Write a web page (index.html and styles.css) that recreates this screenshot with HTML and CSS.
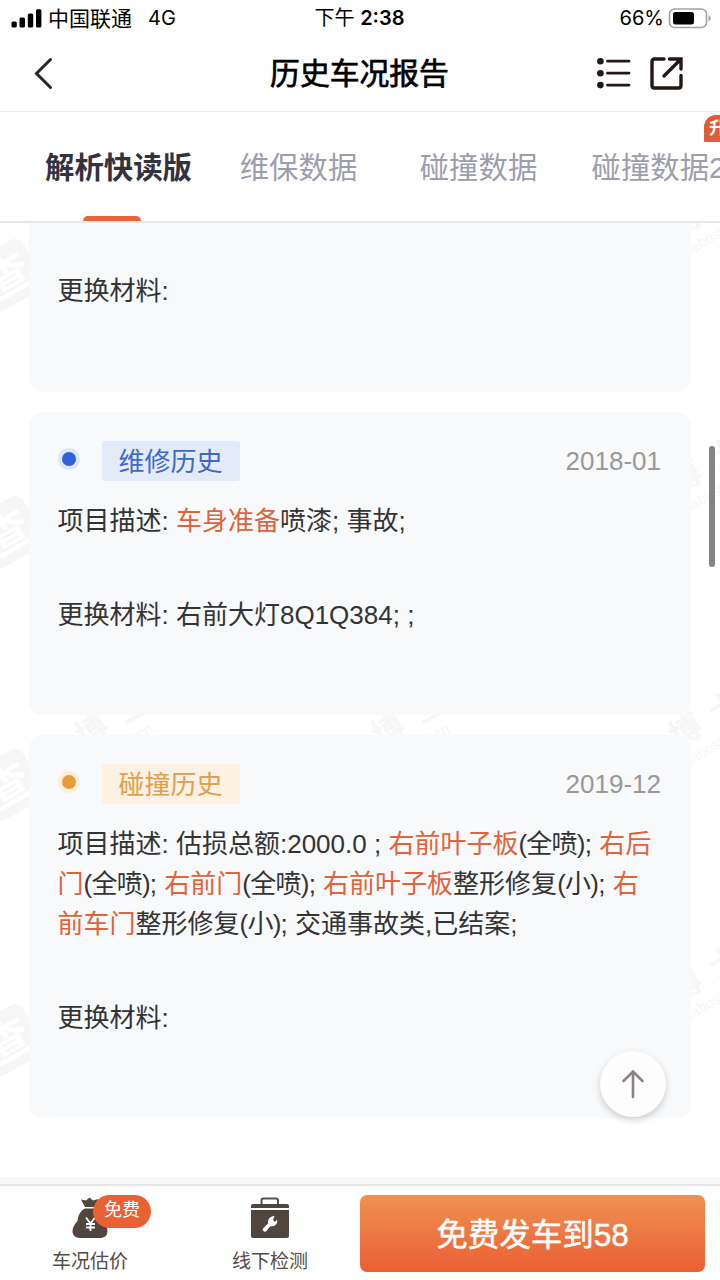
FILE: index.html
```html
<!doctype html>
<html lang="zh-CN">
<head>
<meta charset="utf-8">
<meta name="viewport" content="width=device-width, initial-scale=1.0">
<link rel="stylesheet" href="styles.css">
<title>历史车况报告</title>
</head>
<body>
<div class="status">
	<div class="status-left">
		<svg class="signal" width="31" height="19" viewBox="0 0 31 19">
			<rect x="0.5" y="12.5" width="5.3" height="6" rx="1.5"/>
			<rect x="8.5" y="8.5" width="5.5" height="10" rx="1.5"/>
			<rect x="16.8" y="4.5" width="5.4" height="14" rx="1.5"/>
			<rect x="25" y="0.3" width="5.4" height="18.2" rx="1.5"/>
		</svg>
		<span class="carrier">中国联通</span>
		<span class="network">4G</span>
	</div>
	<div class="clock">下午 <b>2:38</b></div>
	<div class="status-right">
		<span>66%</span>
		<svg width="43" height="21" viewBox="0 0 43 21">
			<rect x="1.5" y="1" width="37" height="18.5" rx="5" fill="none" stroke="#a3a3a3" stroke-width="1.6"/>
			<rect x="5" y="4" width="21" height="12.5" rx="2.5"/>
			<path d="M40.5 7.2c1.6.6 2.2 1.7 2.2 3s-.6 2.4-2.2 3z" fill="#a3a3a3"/>
		</svg>
	</div>
</div>

<header class="nav">
	<svg class="back" width="20" height="34" viewBox="0 0 20 34"><path d="M17.5 3.5 3.5 17.5 17.5 31.5"/></svg>
	<h1>历史车况报告</h1>
	<div class="nav-actions">
		<svg width="34" height="34" viewBox="0 0 34 34">
			<g fill="#231815"><circle cx="3.4" cy="5.2" r="3.3"/><circle cx="3.4" cy="17.2" r="3.3"/><circle cx="3.4" cy="29.1" r="3.3"/></g>
			<path d="M10.5 5.2H32M10.5 17.2H32M10.5 29.1H32"/>
		</svg>
		<svg width="34" height="34" viewBox="0 0 34 34">
			<path class="thick" d="M14 3H4.500Q2 3 2 5.500V29.500Q2 32 4.500 32H28.500Q31 32 31 29.500V19.500M19.500 3H31V13M31 3 14 20"/>
		</svg>
	</div>
</header>

<nav class="tabs">
	<a class="tab active">解析快读版</a>
	<a class="tab">维保数据</a>
	<a class="tab">碰撞数据</a>
	<a class="tab">碰撞数据2<span class="badge">升级</span></a>
</nav>

<main class="content">
	<svg class="watermark" width="720" height="955" viewBox="0 223 720 955">
		<defs>
			<g id="mark">
				<g transform="translate(8 275) rotate(-30)">
					<rect x="-29" y="-29" width="58" height="58" rx="10"/>
					<text class="mark-logo" x="-22" y="17">查</text>
				</g>
				<g transform="translate(90 218) rotate(-30)">
					<text class="mark-name" x="-16" y="14">博</text>
					<text class="mark-name" x="30" y="14">士</text>
					<text class="mark-url" x="-24" y="35">chaboshi.cn</text>
				</g>
			</g>
		</defs>
		<use href="#mark"/><use href="#mark" x="297"/><use href="#mark" x="594"/>
		<use href="#mark" y="257"/><use href="#mark" x="297" y="257"/><use href="#mark" x="594" y="257"/>
		<use href="#mark" y="510"/><use href="#mark" x="297" y="510"/><use href="#mark" x="594" y="510"/>
		<use href="#mark" y="765"/><use href="#mark" x="297" y="765"/><use href="#mark" x="594" y="765"/>
	</svg>

	<section class="card first">
		<p>更换材料:</p>
	</section>

	<section class="card repair">
		<div class="card-head">
			<i class="dot"></i><span class="tag">维修历史</span><time>2018-01</time>
		</div>
		<p>项目描述: <em>车身准备</em>喷漆; 事故;</p>
		<p>更换材料: 右前大灯8Q1Q384; ;</p>
	</section>

	<section class="card crash">
		<div class="card-head">
			<i class="dot"></i><span class="tag">碰撞历史</span><time>2019-12</time>
		</div>
		<p>项目描述: 估损总额:2000.0 ; <em>右前叶子板</em><span class="note">(全喷)</span>; <em>右后门</em><span class="note">(全喷)</span>; <em>右前门</em><span class="note">(全喷)</span>; <em>右前叶子板</em>整形修复<span class="note">(小)</span>; <em>右前车门</em>整形修复<span class="note">(小)</span>; 交通事故类,已结案;</p>
		<p>更换材料:</p>
	</section>

	<div class="scrollbar"></div>
	<a class="to-top">
		<svg width="24" height="30" viewBox="0 0 24 30"><path d="M12 28V2.500M2.500 12 12 2.500 21.500 12"/></svg>
	</a>
</main>

<footer class="bottom">
	<a class="action">
		<span class="icon">
			<svg width="36" height="42" viewBox="0 0 36 42">
				<path d="M9 2.500 14 3.500 17.500.500 21 3.500 26 2 24 10H13z"/>
				<path d="M13 11.500H24C29 15 30 19 30.500 24 33 27 35.500 30 35.500 34 35.500 39 32 41 28 41H8C3 41 .500 38 .500 34 .500 30 3 27 5.500 24 6 19 8 14 13 11.500z"/>
				<path class="yen" d="M14 20.500 18.500 26.500 23 20.500M14 27H23M14 30.500H23M18.500 26.500V34"/>
			</svg>
			<span class="free">免费</span>
		</span>
		<span>车况估价</span>
	</a>
	<a class="action">
		<span class="icon">
			<svg width="40" height="42" viewBox="0 0 40 42">
				<path d="M11.500 8V3.500Q11.500 1.500 13.500 1.500H26Q28 1.500 28 3.500V8" fill="none" stroke="#5a504b" stroke-width="2"/>
				<path d="M1 9Q1 7 3 7H37Q39 7 39 9V11H1zM1 13H39V39Q39 41 37 41H3Q1 41 1 39z"/>
				<path d="M22 19.500Q24 18.500 24.500 19L23 23 25 25 27 22.500Q28 27 24 29 21.500 29 20 29.500L16 34.500Q13 35.500 12.500 32L18 26.500Q17.500 21 22 19.500z" fill="#fff"/>
			</svg>
		</span>
		<span>线下检测</span>
	</a>
	<a class="send">免费发车到58</a>
</footer>
</body>
</html>
```
FILE: styles.css
```css
* {
	box-sizing: border-box;
}
body {
	display: flex;
	flex-direction: column;
	width: 720px;
	height: 1280px;
	margin: 0;
	overflow: hidden;
	background: #fff;
	color: #333;
	font-family: "Liberation Sans", "Noto Sans CJK SC", sans-serif;
	font-size: 26px;
	line-height: 40px;
}
svg {
	display: block;
}
h1, p {
	margin: 0;
}

/* status bar */
.status {
	display: grid;
	grid-template-columns: 1fr auto 1fr;
	align-items: center;
	flex: none;
	height: 36px;
	padding: 0 9px 0 11px;
	color: #000;
	font-family: Inter, "Noto Sans CJK SC", sans-serif;
	font-size: 20px;
	line-height: 37px;
}
.status-left, .status-right {
	display: flex;
	align-items: center;
}
.status-right {
	justify-content: flex-end;
	gap: 4px;
}
.signal {
	margin-right: 6px;
}
.carrier {
	margin-right: 16px;
	font-size: 21px;
}
.clock {
	margin-right: 3px;
}
.clock b {
	font-weight: 600;
}

/* title bar */
.nav {
	display: grid;
	grid-template-columns: 1fr auto 1fr;
	align-items: center;
	flex: none;
	height: 76px;
	padding: 0 36px 2px 33px;
	border-bottom: 1px solid #ededed;
}
.nav svg path {
	fill: none;
	stroke: #231815;
	stroke-width: 2.8;
	stroke-linecap: round;
}
.nav .back path {
	stroke: #27262f;
	stroke-width: 3;
}
.nav .thick {
	stroke-width: 3.4;
}
.nav h1 {
	margin: 3px -1px 0 1px;
	color: #000;
	font-size: 29.8px;
	font-weight: normal;
	-webkit-text-stroke: .7px #000;
}
.nav-actions {
	display: flex;
	justify-content: flex-end;
	gap: 19px;
}

/* tabs */
.tabs {
	display: flex;
	flex: none;
	height: 111px;
	padding-left: 28.5px;
	overflow: hidden;
	border-bottom: 2px solid #e6e6e6;
}
.tab {
	position: relative;
	flex: 0 0 180px;
	color: #9c9dad;
	font-size: 29.4px;
	line-height: 111px;
	text-align: center;
	white-space: nowrap;
}
.tab.active {
	color: #33333d;
	font-weight: bold;
}
.tab.active:after {
	content: "";
	position: absolute;
	left: 54px;
	bottom: 0;
	width: 58px;
	height: 5px;
	border-radius: 5px 5px 0 0;
	background: #e6633c;
}
.badge {
	position: absolute;
	left: 135.5px;
	top: 3px;
	height: 27px;
	padding: 0 5px;
	border-radius: 12px 12px 12px 1px;
	background: #e05c38;
	color: #fff;
	font-size: 17px;
	font-weight: bold;
	line-height: 27px;
}

/* records */
.content {
	position: relative;
	flex: none;
	height: 954px;
	padding: 0 29px;
	overflow: hidden;
}
.watermark {
	position: absolute;
	left: 0;
	top: 0;
	fill: #f6f6f6;
	font-family: "Liberation Sans", "Noto Sans CJK SC", sans-serif;
	font-weight: bold;
}
.mark-logo {
	fill: #fff;
	font-size: 44px;
}
.mark-name {
	font-size: 32px;
}
.mark-url {
	font-size: 14.5px;
	font-weight: normal;
}
.card {
	position: relative;
	margin-bottom: 20px;
	padding: 29px 29px 0 28.5px;
	border-radius: 14px;
	background: #f8f9fb;
}
.card.first {
	height: 169px;
	padding-top: 48px;
	border-radius: 0 0 14px 14px;
}
.card.repair {
	height: 303px;
}
.card.crash {
	height: 383px;
}
.card p + p {
	margin-top: 54px;
}
.card em {
	color: #df643c;
	font-style: normal;
}
.note {
	letter-spacing: -.75px;
}
.card-head {
	display: flex;
	align-items: center;
	height: 40px;
	margin-bottom: 20px;
}
.dot {
	width: 22px;
	height: 22px;
	margin: -4px 22px 0 0;
	border: 4px solid #dee6fa;
	border-radius: 50%;
	background: #2f62d9;
}
.tag {
	height: 40px;
	padding: 0 17px;
	border-radius: 3px;
	background: #e3ebf8;
	color: #3e68c9;
	line-height: 42px;
}
.crash .dot {
	border-color: #fbeedb;
	background: #e69d3a;
}
.crash .tag {
	background: #fcf1e3;
	color: #dfa04c;
}
.card time {
	margin: 0 1px 0 auto;
	color: #999;
}
.scrollbar {
	position: absolute;
	right: 5px;
	top: 223px;
	width: 6px;
	height: 121px;
	border-radius: 3px;
	background: #838383;
}
.to-top {
	position: absolute;
	left: 600px;
	top: 828px;
	display: flex;
	align-items: center;
	justify-content: center;
	width: 66px;
	height: 66px;
	border-radius: 50%;
	background: #fdfdfd;
	box-shadow: 0 3px 7px rgba(0, 0, 0, .18);
}
.to-top path {
	fill: none;
	stroke: #898481;
	stroke-width: 2.6;
	stroke-linecap: round;
}

/* bottom bar */
.bottom {
	display: flex;
	flex: none;
	height: 103px;
	padding-right: 15px;
	border-top: 7px solid #f7f7f7;
	box-shadow: inset 0 2px 0 #e6e6e6;
}
.action {
	display: flex;
	flex-direction: column;
	align-items: center;
	width: 180px;
	padding-top: 13px;
	color: #534b47;
	font-size: 19px;
	line-height: 45px;
}
.icon {
	position: relative;
	height: 43px;
	fill: #51463f;
}
.yen {
	fill: none;
	stroke: #fff;
	stroke-width: 1.8;
}
.free {
	position: absolute;
	left: 21px;
	top: -2px;
	width: 58px;
	height: 33px;
	border-radius: 17px;
	background: #ea6035;
	color: #fff;
	font-size: 18px;
	line-height: 30px;
	text-align: center;
}
.send {
	width: 345px;
	height: 77px;
	margin-top: 11px;
	border-radius: 7px;
	background: linear-gradient(#ef9151, #ea5f34);
	color: #fff;
	font-size: 31.5px;
	line-height: 80px;
	text-align: center;
	-webkit-text-stroke: .5px #fff;
}
```
